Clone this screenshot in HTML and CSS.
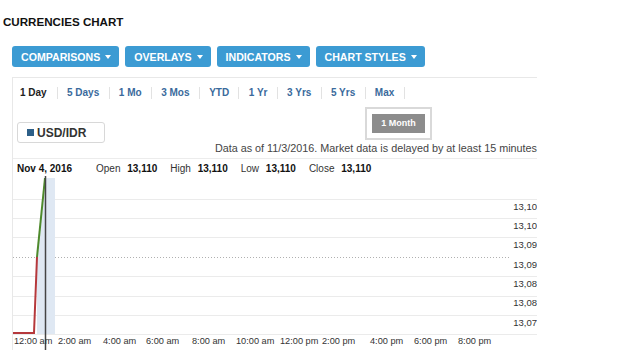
FILE: index.html
```html
<!DOCTYPE html>
<html lang="en">
<head>
    <meta charset="UTF-8">
    <title>Currencies Chart</title>
    <link rel="stylesheet" href="styles.css">
</head>
<body>

    <!-- Heading -->
    <h1 class="title">CURRENCIES CHART</h1>

    <!-- Toolbar -->
    <div class="toolbar">
        <button class="menu-btn">COMPARISONS <span class="caret"></span></button>
        <button class="menu-btn">OVERLAYS <span class="caret"></span></button>
        <button class="menu-btn">INDICATORS <span class="caret"></span></button>
        <button class="menu-btn">CHART STYLES <span class="caret"></span></button>
    </div>

    <!-- Chart Panel -->
    <div class="panel">
        <ul class="ranges">
            <li class="active">1 Day</li>
            <li>5 Days</li>
            <li>1 Mo</li>
            <li>3 Mos</li>
            <li>YTD</li>
            <li>1 Yr</li>
            <li>3 Yrs</li>
            <li>5 Yrs</li>
            <li>Max</li>
        </ul>

        <div class="controls">
            <div class="legend"><span class="swatch"></span>USD/IDR</div>
            <div class="period"><span class="period-btn">1 Month</span></div>
        </div>

        <p class="note">Data as of 11/3/2016. Market data is delayed by at least 15 minutes</p>

        <div class="ohlc">
            <span class="date">Nov 4, 2016</span>
            <span class="stat">Open <b>13,110</b></span>
            <span class="stat">High <b>13,110</b></span>
            <span class="stat">Low <b>13,110</b></span>
            <span class="stat">Close <b>13,110</b></span>
        </div>

        <svg class="chart" width="524" height="175" viewBox="13 175 524 175">
            <!-- grid -->
            <g class="grid">
                <line x1="13" y1="199.5" x2="537" y2="199.5"/>
                <line x1="13" y1="218.5" x2="537" y2="218.5"/>
                <line x1="13" y1="237.5" x2="537" y2="237.5"/>
                <line x1="13" y1="276.5" x2="537" y2="276.5"/>
                <line x1="13" y1="296.5" x2="537" y2="296.5"/>
                <line x1="13" y1="315.5" x2="537" y2="315.5"/>
                <line x1="13" y1="334.5" x2="537" y2="334.5"/>
            </g>
            <line class="prev-close" x1="13" y1="257.5" x2="510" y2="257.5"/>

            <!-- y labels -->
            <g class="ylabels">
                <text x="537" y="209.5">13,10</text>
                <text x="537" y="228.5">13,10</text>
                <text x="537" y="247.5">13,09</text>
                <text x="537" y="267.5">13,09</text>
                <text x="537" y="286.5">13,08</text>
                <text x="537" y="305.5">13,08</text>
                <text x="537" y="325.5">13,07</text>
            </g>

            <!-- price -->
            <polygon class="band" points="37,334 37,257 46,178 55,178 55,334"/>
            <polyline class="down" points="13,333 34,333 37,257"/>
            <polyline class="up" points="37,257 45,178"/>
            <line class="cursor" x1="45.5" y1="176" x2="45.5" y2="350"/>

            <!-- x labels -->
            <g class="xlabels">
                <text x="14" y="344">12:00 am</text>
                <text x="58" y="344">2:00 am</text>
                <text x="103" y="344">4:00 am</text>
                <text x="146" y="344">6:00 am</text>
                <text x="192" y="344">8:00 am</text>
                <text x="236" y="344">10:00 am</text>
                <text x="280" y="344">12:00 pm</text>
                <text x="322" y="344">2:00 pm</text>
                <text x="370" y="344">4:00 pm</text>
                <text x="414" y="344">6:00 pm</text>
                <text x="458" y="344">8:00 pm</text>
            </g>
        </svg>
    </div>

</body>
</html>
```

FILE: styles.css
```css
/* Global Styles */
body {
    font-family: 'Liberation Sans', Arial, sans-serif;
    margin: 0;
    padding: 0;
    background: #fff;
    color: #222;
    overflow: hidden;
}

.title {
    margin: 0;
    padding: 15px 0 0 3px;
    font-size: 11.6px;
    line-height: 14px;
    font-weight: bold;
    color: #111;
}

/* Toolbar */
.toolbar {
    display: flex;
    gap: 6px;
    margin: 17px 0 0 12px;
}

.menu-btn {
    display: flex;
    align-items: center;
    gap: 5px;
    height: 21px;
    padding: 0 8px 0 9px;
    border: none;
    border-radius: 3px;
    background: #3c9bd3;
    color: #fff;
    font-family: 'Liberation Sans', Arial, sans-serif;
    font-size: 10.6px;
    font-weight: bold;
}

.caret {
    width: 0;
    height: 0;
    border-left: 3.5px solid transparent;
    border-right: 3.5px solid transparent;
    border-top: 4px solid #fff;
    margin-top: 1px;
}

/* Panel */
.panel {
    width: 524px;
    margin: 10px 0 0 12px;
    border-top: 1px solid #e8e8e8;
    border-left: 1px solid #e8e8e8;
}

.ranges {
    display: flex;
    list-style: none;
    margin: 0;
    padding: 9px 0 0 0;
}

.ranges li {
    padding: 0 9.3px;
    border-right: 1px solid #e2e2e2;
    font-size: 10px;
    line-height: 12px;
    font-weight: bold;
    color: #3a6a9c;
}

.ranges li:first-child {
    padding-left: 7px;
    padding-right: 10px;
}

.ranges li.active {
    color: #222;
}

.controls {
    display: flex;
    align-items: flex-start;
    height: 33px;
    margin-top: 8px;
}

.legend {
    display: flex;
    align-items: center;
    gap: 3px;
    width: 77px;
    height: 19px;
    margin: 15px 0 0 4px;
    padding-left: 9px;
    border: 1px solid #d8d8d8;
    border-radius: 3px;
    font-size: 12px;
    font-weight: bold;
    color: #333;
}

.swatch {
    width: 7px;
    height: 7px;
    background: #2d5f88;
}

.period {
    margin-left: 260px;
    padding: 5px;
    border: 2px solid #d9d9d9;
}

.period-btn {
    display: block;
    width: 53px;
    height: 19px;
    line-height: 19px;
    background: #8c8c8c;
    color: #fff;
    font-size: 9px;
    font-weight: bold;
    text-align: center;
}

.note {
    margin: 2px 0 0 0;
    font-size: 10.8px;
    line-height: 13px;
    color: #444;
    text-align: right;
}

.ohlc {
    display: flex;
    margin-top: 3px;
    padding: 4px 0 0 4px;
    border-top: 1px solid #ececec;
    font-size: 10px;
    line-height: 12px;
    color: #333;
}

.ohlc .date {
    width: 79px;
    font-weight: bold;
    color: #111;
}

.ohlc .stat {
    margin-right: 13px;
}

.ohlc .stat b {
    margin-left: 4px;
    color: #111;
}

/* Chart */
.chart {
    display: block;
}

.grid line {
    stroke: #ebebeb;
    stroke-width: 1;
}

.prev-close {
    stroke: #b0b0b0;
    stroke-width: 1;
    stroke-dasharray: 1 2;
}

.ylabels text {
    font-family: 'Liberation Sans', Arial, sans-serif;
    font-size: 9.5px;
    fill: #333;
    text-anchor: end;
}

.xlabels text {
    font-family: 'Liberation Sans', Arial, sans-serif;
    font-size: 9.2px;
    fill: #333;
}

.band {
    fill: #dfe8f3;
}

.down {
    fill: none;
    stroke: #b5383c;
    stroke-width: 2;
}

.up {
    fill: none;
    stroke: #4e8a2c;
    stroke-width: 2;
}

.cursor {
    stroke: #444;
    stroke-width: 1.5;
}
```
